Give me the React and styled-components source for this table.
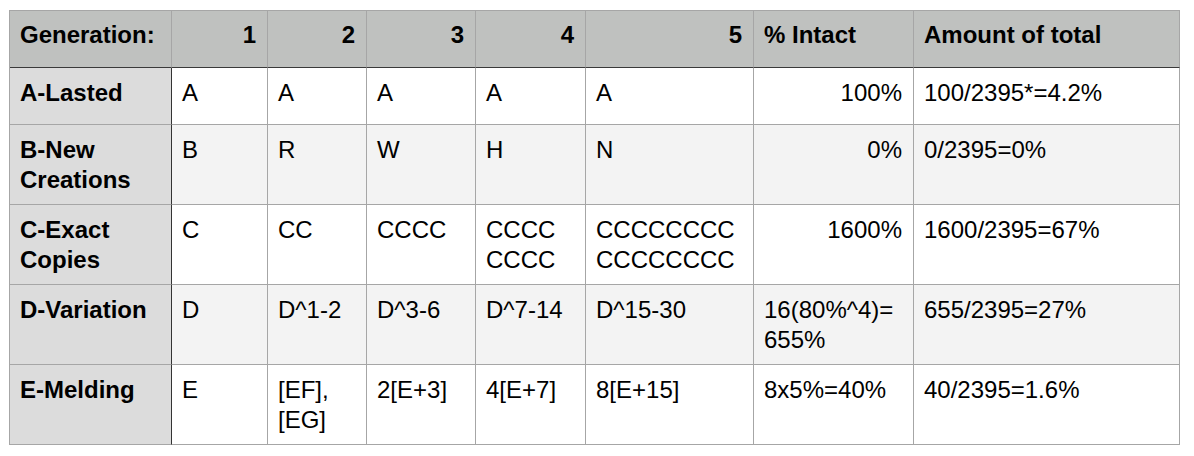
import React from "react";
import styled, { createGlobalStyle } from "styled-components";

const Global = createGlobalStyle`
  html, body { margin: 0; padding: 0; background: #ffffff; }
  body { font-family: "Liberation Sans", Arial, Helvetica, sans-serif; }
  * { box-sizing: border-box; }
`;

const Page = styled.div`
  padding: 10px 0 0 9px;
`;

const Grid = styled.div`
  display: grid;
  width: 1171px;
  grid-template-columns: 162px 96px 99px 109px 110px 168px 160px 266px;
  grid-template-rows: 57px 57px repeat(4, 80px);
  border-left: 1px solid #a6a6a6;
  border-top: 1px solid #a6a6a6;
  color: #000;
  font-size: 24px;
  line-height: 30px;
`;

const Cell = styled.div`
  border-right: 1px solid ${(p) => (p.$stub && !p.$head ? "#333" : "#a6a6a6")};
  border-bottom: 1px solid ${(p) => (p.$head ? "#3a3a3a" : "#a6a6a6")};
  background: ${(p) =>
    p.$head ? "#bfc1bf" : p.$stub ? "#dcdcdc" : p.$alt ? "#f3f3f3" : "#ffffff"};
  font-weight: ${(p) => (p.$head || p.$stub ? 700 : 400)};
  text-align: ${(p) => (p.$right ? "right" : "left")};
  padding: ${(p) => (p.$head ? "9px 11px 0 10px" : "10px 11px 0 10px")};
  white-space: nowrap;
  overflow: hidden;
`;

const headers = [
  { t: "Generation:" },
  { t: "1", r: true },
  { t: "2", r: true },
  { t: "3", r: true },
  { t: "4", r: true },
  { t: "5", r: true },
  { t: "% Intact" },
  { t: "Amount of total" },
];

const rows = [
  ["A-Lasted", "A", "A", "A", "A", "A", "100%", "100/2395*=4.2%"],
  [["B-New", "Creations"], "B", "R", "W", "H", "N", "0%", "0/2395=0%"],
  [
    ["C-Exact", "Copies"],
    "C",
    "CC",
    "CCCC",
    ["CCCC", "CCCC"],
    ["CCCCCCCC", "CCCCCCCC"],
    "1600%",
    "1600/2395=67%",
  ],
  ["D-Variation", "D", "D^1-2", "D^3-6", "D^7-14", "D^15-30", ["16(80%^4)=", "655%"], "655/2395=27%"],
  ["E-Melding", "E", ["[EF],", "[EG]"], "2[E+3]", "4[E+7]", "8[E+15]", "8x5%=40%", "40/2395=1.6%"],
];

const Lines = ({ v }) =>
  Array.isArray(v)
    ? v.map((l, i) => (
        <React.Fragment key={i}>
          {i > 0 && <br />}
          {l}
        </React.Fragment>
      ))
    : v;

export default function App() {
  return (
    <>
      <Global />
      <Page>
        <Grid>
          {headers.map((h, i) => (
            <Cell key={"h" + i} $head $right={h.r}>
              {h.t}
            </Cell>
          ))}
          {rows.map((row, ri) =>
            row.map((v, ci) => (
              <Cell
                key={ri + "-" + ci}
                $stub={ci === 0}
                $alt={ri % 2 === 1}
                $right={ci === 6 && ri < 3}
              >
                <Lines v={v} />
              </Cell>
            ))
          )}
        </Grid>
      </Page>
    </>
  );
}
